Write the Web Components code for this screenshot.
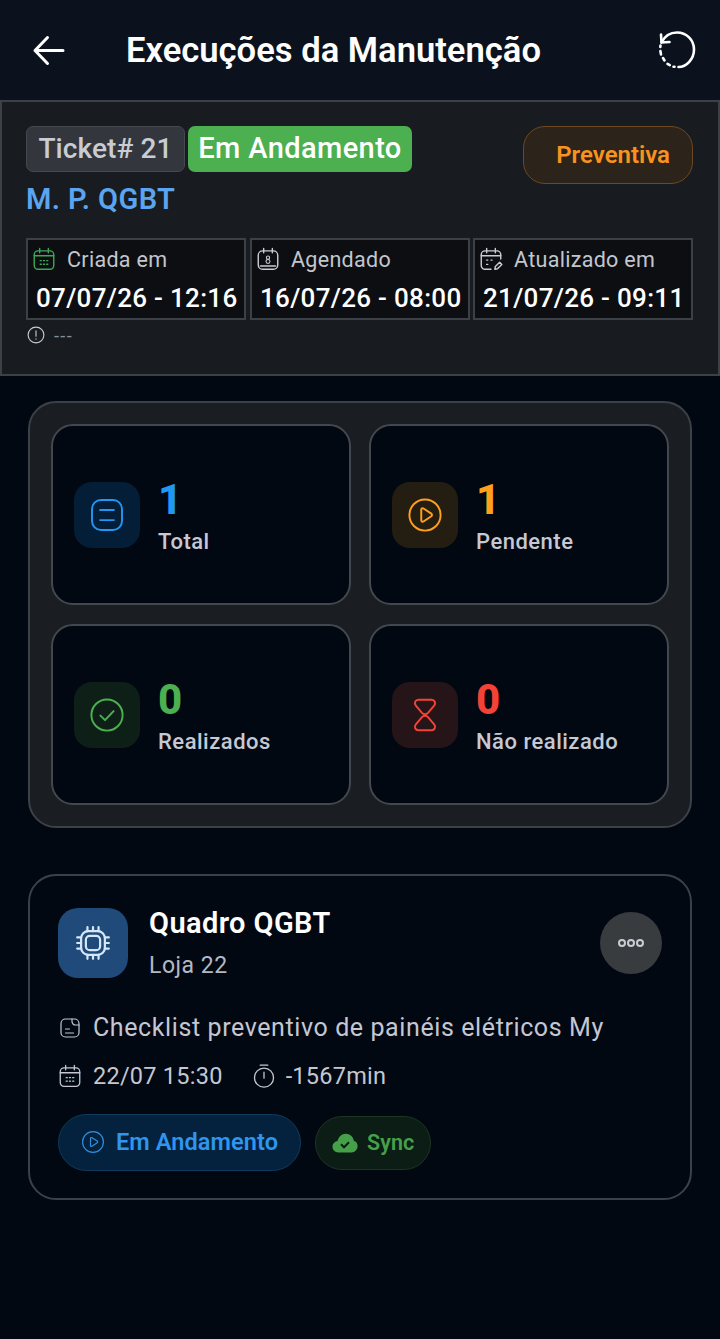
<!DOCTYPE html>
<html lang="pt-BR">
<head>
<meta charset="utf-8">
<title>Execuções da Manutenção</title>
<style>
  html, body { margin: 0; padding: 0; background: #020812; }
  body { font-family: Roboto, "Liberation Sans", sans-serif; min-height: 1339px; }
</style>
</head>
<body>
<app-bar title="Execuções da Manutenção"></app-bar>
<ticket-panel></ticket-panel>
<stat-grid>
  <stat-card value="1" label="Total" color="#2196f3" tint="#031e36" icon="list"></stat-card>
  <stat-card value="1" label="Pendente" color="#ff9f1c" tint="#241d12" icon="play"></stat-card>
  <stat-card value="0" label="Realizados" color="#4caf50" tint="#0e1f18" icon="check"></stat-card>
  <stat-card value="0" label="Não realizado" color="#f44336" tint="#251518" icon="hourglass"></stat-card>
</stat-grid>
<task-card></task-card>

<script>
// icon bodies, all on a 24 box, stroke comes from currentColor
const ICONS = {
  list: '<rect x="2" y="2" width="20" height="20" rx="6"/><path d="M7.4 8.600h9.200M7.400 15.400h9.200"/>',
  play: '<circle cx="12" cy="12" r="10.400"/><path d="M9.500 8.500v7c0 .8.8 1.200 1.500.8l5.200-3.500c.6-.4.6-1.300 0-1.700L11 7.700c-.7-.4-1.500 0-1.500.8z"/>',
  check: '<circle cx="12" cy="12" r="10.400"/><path d="M7.600 12.400l3.100 3 5.700-6"/>',
  hourglass: '<path d="M7.600 1.800h8.800c2 0 3.100 2.300 1.700 3.900L14 10.600c-1.100 1.200-2.900 1.200-4 0L5.900 5.700C4.500 4.100 5.600 1.800 7.600 1.800z"/><path d="M10 13.400c1.100-1.200 2.900-1.200 4 0l4.100 4.900c1.400 1.600.3 3.900-1.700 3.900H7.600c-2 0-3.100-2.300-1.700-3.900z"/>',
  calendar: '<rect x="3" y="4.500" width="18" height="17" rx="3.500"/><path d="M3 9h18M8 2.300v4M16 2.300v4M8.500 13.500h1M11.500 13.500h1M14.500 13.500h1M8.500 16.800h1M11.500 16.800h1M14.500 16.800h1"/>',
  calendarDay: '<rect x="3" y="4.500" width="18" height="17" rx="4"/><path d="M8 2.300v4M16 2.300v4M5 18.500h14"/><circle cx="12" cy="10.800" r="1.500" stroke-width="1"/><circle cx="12" cy="14.300" r="1.800" stroke-width="1"/>',
  calendarEdit: '<path d="M21 12V8a3.500 3.500 0 0 0-3.500-3.500h-11A3.500 3.500 0 0 0 3 8v10a3.500 3.500 0 0 0 3.500 3.500H12"/><path d="M3 9h18M8 2.300v4M16 2.300v4M8 13h1M8 17h1M12 13h1"/><path d="M15.500 21.500l.5-2.500 4-4 2 2-4 4z"/>',
  alert: '<circle cx="12" cy="12" r="10.500"/><path d="M12 6.500v7M12 17v.5"/>',
  chip: '<rect x="7.500" y="7.500" width="9" height="9" rx="2.500"/><rect x="4.500" y="4.500" width="15" height="15" rx="4.500"/><path d="M8.500 2v2.500M12 2v2.500M15.500 2v2.500M8.500 19.500V22M12 19.500V22M15.500 19.500V22M2 8.500h2.500M2 12h2.500M2 15.500h2.500M19.500 8.500H22M19.500 12H22M19.500 15.500H22"/>',
  note: '<rect x="3" y="3" width="18" height="18" rx="4.500"/><path d="M14 3v2.500A3.500 3.500 0 0 0 17.500 9H21M7.500 13h4M7.500 17h8"/>',
  timer: '<circle cx="12" cy="13.500" r="8.800"/><path d="M12 8.500v5.500M8.500 2h7"/>'
};

function svgIcon(name, size, width) {
  return `<svg width="${size}" height="${size}" viewBox="0 0 24 24" fill="none" stroke="currentColor" stroke-width="${width}" stroke-linecap="round" stroke-linejoin="round">${ICONS[name]}</svg>`;
}

class AppBar extends HTMLElement {
  constructor() {
    super();
    this.attachShadow({ mode: 'open' });
    this.shadowRoot.innerHTML = `
      <style>
        :host { display: block; background: #0b121d; color: #fff; }
        .bar { height: 100px; box-sizing: border-box; display: flex; align-items: center; padding: 0 22px 0 32px; }
        .back { width: 34px; height: 34px; flex: none; }
        h1 { margin: 0 0 0 60px; flex: 1; font-size: 34.600px; font-weight: 600; white-space: nowrap; }
        .reload { width: 42px; height: 42px; flex: none; }
      </style>
      <div class="bar">
        <svg class="back" viewBox="0 0 34 34" fill="none" stroke="currentColor" stroke-width="3" stroke-linecap="round" stroke-linejoin="round">
          <path d="M3 17.500h28M15.500 4.500L3 17.500 15.500 30.500"/>
        </svg>
        <h1>${this.getAttribute('title')}</h1>
        <svg class="reload" viewBox="0 0 42 42" fill="none" stroke="currentColor" stroke-width="2.600" stroke-linecap="round" stroke-linejoin="round">
          <path d="M5.500 13.500C9 6.500 15 3.500 21 3.500c9.500 0 17 7.500 17 17 0 9.500-7.500 17.500-15.500 17.500"/>
          <path d="M5 5.500l.5 8 8-.5"/>
          <path d="M18.500 37.700h-1M13.800 36.200l-2.300-1.300M8.500 31.500l-1.500-2.500M5 25.500l-.6-3.500M4.300 18l.2-1.500"/>
        </svg>
      </div>`;
  }
}
customElements.define('app-bar', AppBar);

class DateCell extends HTMLElement {
  constructor() {
    super();
    this.attachShadow({ mode: 'open' });
    const color = this.getAttribute('color') || '#c9ccd2';
    this.shadowRoot.innerHTML = `
      <style>
        :host { display: block; box-sizing: border-box; width: 220px; height: 82px; border: 2px solid #3c4148; background: #0c0e12; padding: 5px 0 0 3px; }
        .top { display: flex; align-items: center; gap: 10px; color: #c3c6cc; font-size: 21.500px; letter-spacing: .3px; height: 28px; }
        .top svg { flex: none; color: ${color}; }
        .val { margin-top: 9px; padding-left: 5px; color: #fff; font-size: 26px; font-weight: 500; letter-spacing: .3px; white-space: nowrap; line-height: 32px; }
      </style>
      <div class="top">${svgIcon(this.getAttribute('icon'), 26, 1.300)}<span>${this.getAttribute('label')}</span></div>
      <div class="val">${this.getAttribute('value')}</div>`;
  }
}
customElements.define('date-cell', DateCell);

class TicketPanel extends HTMLElement {
  constructor() {
    super();
    this.attachShadow({ mode: 'open' });
    this.shadowRoot.innerHTML = `
      <style>
        :host { display: block; box-sizing: border-box; height: 276px; background: #181b20; border: 2px solid #3c4148; padding: 24px 25px 0 24px; }
        .head { display: flex; justify-content: space-between; align-items: flex-start; }
        .chips { display: flex; gap: 3px; }
        .chip { box-sizing: border-box; height: 46px; display: flex; align-items: center; justify-content: center; border-radius: 7px; font-weight: 500; padding-bottom: 2px; }
        .ticket { width: 159px; background: #33373d; border: 1.500px solid #44484f; color: #c9ccd2; font-size: 28px; letter-spacing: .1px; }
        .status { width: 224px; background: #4caf50; color: #fff; font-size: 29px; letter-spacing: .4px; }
        .type { box-sizing: border-box; width: 170px; height: 58px; display: flex; align-items: center; justify-content: flex-end; padding-right: 22px; border-radius: 22px; background: #2c241a; border: 1.500px solid #6a4a1e; color: #f7931e; font-size: 24px; font-weight: 600; }
        h2 { margin: -5px 0 0 0; color: #5aa4f0; font-size: 29px; font-weight: 600; line-height: 40px; letter-spacing: .4px; }
        .dates { display: grid; grid-template-columns: 224px 223px 220px; margin-top: 19px; }
        .note { display: flex; align-items: center; gap: 9px; color: #8a8e95; font-size: 18px; letter-spacing: 1.400px; margin: 6px 0 0 1px; height: 18px; }
        .note svg { color: #c9ccd2; }
      </style>
      <div class="head">
        <div class="chips">
          <div class="chip ticket">Ticket# 21</div>
          <div class="chip status">Em Andamento</div>
        </div>
        <div class="type">Preventiva</div>
      </div>
      <h2>M. P. QGBT</h2>
      <div class="dates">
        <date-cell icon="calendar" color="#3fa657" label="Criada em" value="07/07/26 - 12:16"></date-cell>
        <date-cell icon="calendarDay" label="Agendado" value="16/07/26 - 08:00"></date-cell>
        <date-cell icon="calendarEdit" label="Atualizado em" value="21/07/26 - 09:11"></date-cell>
      </div>
      <div class="note">${svgIcon('alert', 18, 1.500)}<span>---</span></div>`;
  }
}
customElements.define('ticket-panel', TicketPanel);

class StatGrid extends HTMLElement {
  constructor() {
    super();
    this.attachShadow({ mode: 'open' });
    this.shadowRoot.innerHTML = `
      <style>
        :host { display: grid; box-sizing: border-box; width: 664px; height: 427px; margin: 25px 0 0 28px; padding: 21px; grid-template-columns: 300px 300px; grid-template-rows: 181px 181px; column-gap: 18px; row-gap: 19px; background: #1a1d21; border: 2px solid #3c4148; border-radius: 28px; }
      </style>
      <slot></slot>`;
  }
}
customElements.define('stat-grid', StatGrid);

class StatCard extends HTMLElement {
  constructor() {
    super();
    this.attachShadow({ mode: 'open' });
    const color = this.getAttribute('color');
    this.shadowRoot.innerHTML = `
      <style>
        :host { display: flex; align-items: center; gap: 18px; box-sizing: border-box; padding: 0 0 0 21px; background: #020812; border: 2px solid #43484f; border-radius: 22px; }
        .icon { width: 66px; height: 66px; border-radius: 18px; background: ${this.getAttribute('tint')}; color: ${color}; display: flex; align-items: center; justify-content: center; flex: none; }
        .val { color: ${color}; font-size: 42px; font-weight: 800; line-height: 48px; }
        .lab { color: #c6c9d3; font-size: 22px; font-weight: 500; letter-spacing: .5px; line-height: 28px; margin-top: 4px; }
        .txt { margin-top: 3px; }
      </style>
      <div class="icon">${svgIcon(this.getAttribute('icon'), 36, 1.300)}</div>
      <div class="txt"><div class="val">${this.getAttribute('value')}</div><div class="lab">${this.getAttribute('label')}</div></div>`;
  }
}
customElements.define('stat-card', StatCard);

class StatusPill extends HTMLElement {
  constructor() {
    super();
    this.attachShadow({ mode: 'open' });
    this.shadowRoot.innerHTML = `
      <style>
        :host { display: inline-flex; align-items: center; box-sizing: border-box; border-radius: 30px; font-weight: 600; font-size: 23.500px; letter-spacing: .1px; white-space: nowrap; }
      </style>
      <slot></slot>`;
  }
}
customElements.define('status-pill', StatusPill);

class TaskCard extends HTMLElement {
  constructor() {
    super();
    this.attachShadow({ mode: 'open' });
    this.shadowRoot.innerHTML = `
      <style>
        :host { display: block; box-sizing: border-box; width: 664px; height: 326px; margin: 46px 0 0 28px; padding: 32px 28px 0 28px; background: #020812; border: 2px solid #3c4148; border-radius: 28px; }
        .head { display: flex; align-items: flex-start; height: 72px; }
        .logo { width: 70px; height: 70px; flex: none; border-radius: 20px; background: #1f4a7a; color: #d5e6f8; display: flex; align-items: center; justify-content: center; }
        .names { flex: 1; margin: -2px 0 0 21px; }
        .name { color: #fff; font-size: 29px; font-weight: 600; line-height: 34px; letter-spacing: .4px; }
        .store { color: #b5b8c2; font-size: 23px; line-height: 30px; margin-top: 11px; letter-spacing: .5px; }
        .more { width: 62px; height: 62px; border-radius: 50%; background: #393c3f; display: flex; align-items: center; justify-content: center; margin-top: 4px; color: #c9ccd2; }
        .line { display: flex; align-items: center; color: #c4c7d1; font-size: 25px; letter-spacing: .6px; gap: 11px; margin: 30px 0 0 0; line-height: 36px; white-space: nowrap; }
        .meta { display: flex; align-items: center; color: #c4c7d1; font-size: 23.500px; letter-spacing: .25px; margin: 14px 0 0 -1px; line-height: 32px; }
        .meta svg { flex: none; margin-right: 10px; }
        .meta span + svg { margin-left: 28px; margin-right: 9px; }
        .pills { display: flex; align-items: center; gap: 14px; margin-top: 22px; }
        .run { width: 243px; height: 57px; padding: 0 0 1px 22px; background: #04223d; border: 1.500px solid #0f3a5c; color: #2f95ee; gap: 11px; }
        .sync { width: 116px; height: 54px; padding-left: 16px; background: #0b1d15; border: 1.500px solid #1c3424; color: #46a04a; gap: 9px; font-size: 21.500px; }
        .run svg { color: #2f8fe0; }
      </style>
      <div class="head">
        <div class="logo">${svgIcon('chip', 38, 1.400)}</div>
        <div class="names">
          <div class="name">Quadro QGBT</div>
          <div class="store">Loja 22</div>
        </div>
        <div class="more">
          <svg width="28" height="10" viewBox="0 0 28 10" fill="none" stroke="currentColor" stroke-width="2"><circle cx="5" cy="5" r="3"/><circle cx="14" cy="5" r="3"/><circle cx="23" cy="5" r="3"/></svg>
        </div>
      </div>
      <div class="line">${svgIcon('note', 24, 1.200)}<span>Checklist preventivo de painéis elétricos My</span></div>
      <div class="meta">${svgIcon('calendar', 26, 1.200)}<span>22/07 15:30</span>${svgIcon('timer', 26, 1.200)}<span>-1567min</span></div>
      <div class="pills">
        <status-pill class="run">${svgIcon('play', 24, 1.200)}Em Andamento</status-pill>
        <status-pill class="sync">
          <svg width="26" height="20" viewBox="0 0 26 20"><path fill="currentColor" d="M6.500 19.500C3 19.500.5 17 .5 13.800c0-3 2.200-5.300 5-5.700C6.700 3.500 10 .8 13.800.8c4.200 0 7.500 3 8 7 2.200.5 3.800 2.700 3.800 5.300 0 3.500-2.700 6.400-6 6.400z"/><path d="M9 11.300l3 3 5-5" fill="none" stroke="#0b1d15" stroke-width="2"/></svg>Sync
        </status-pill>
      </div>`;
  }
}
customElements.define('task-card', TaskCard);
</script>
</body>
</html>
